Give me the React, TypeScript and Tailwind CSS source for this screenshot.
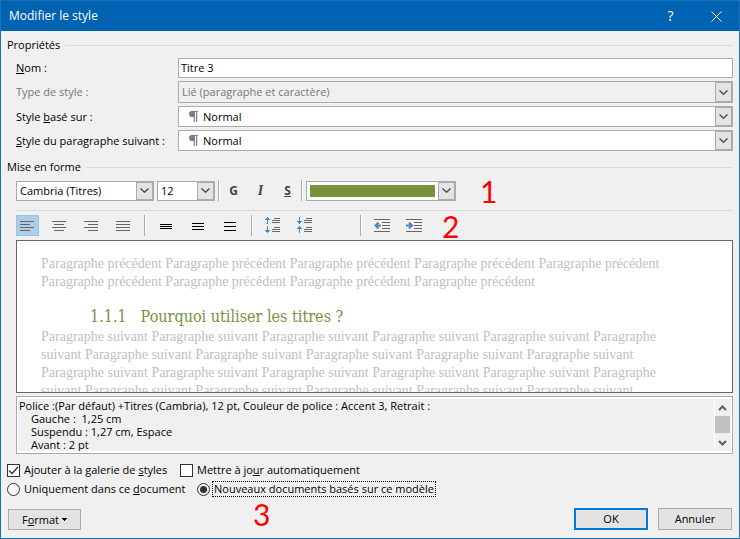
import React from 'react';

type IconProps = { children: React.ReactNode; color?: string };

const Icon: React.FC<IconProps> = ({ children, color = '#666666' }) => (
  <svg width="17" height="17" viewBox="0 0 17 17" stroke={color} fill="none" shapeRendering="crispEdges" aria-hidden="true">
    {children}
  </svg>
);

const Chevron = () => (
  <svg width="9" height="5" viewBox="0 0 9 5" fill="none" stroke="#444444" strokeWidth="1.3" aria-hidden="true">
    <path d="M0.5 0.5 4.5 4.2 8.5 0.5" />
  </svg>
);

const Pilcrow = () => (
  <svg className="ml-[10px] shrink-0" width="9" height="11" viewBox="0 0 9 11" fill="#7f7a94" aria-hidden="true">
    <path d="M3 0H9V1H8.2V11H7V1H6V11H4.8V6H3A3 3 0 0 1 3 0Z" />
  </svg>
);

interface ComboProps {
  id: string;
  label?: string;
  value: string;
  className: string;
  selectClass?: string;
  disabled?: boolean;
  icon?: React.ReactNode;
}

const Combo: React.FC<ComboProps> = ({ id, label, value, className, selectClass = 'pl-[3px]', disabled, icon }) => (
  <div className={`flex items-center border border-[#ababab] ${disabled ? 'bg-[#f0f0f0]' : 'bg-white'} ${className}`}>
    {icon}
    <select
      id={id}
      aria-label={label}
      disabled={disabled}
      className={`h-full min-w-0 flex-1 appearance-none bg-transparent outline-none disabled:text-[#777777] disabled:opacity-100 ${selectClass}`}
    >
      <option>{value}</option>
    </select>
    <ComboArrow />
  </div>
);

const ComboArrow = () => (
  <span className="pointer-events-none flex w-[17px] shrink-0 items-center justify-center self-stretch border border-[#ababab] bg-[#e3e3e3]">
    <Chevron />
  </span>
);

const GroupTitle: React.FC<{ children: React.ReactNode }> = ({ children }) => (
  <div className="flex h-4 items-center gap-[5px]">
    <h2>{children}</h2>
    <div className="h-px flex-1 bg-[#dadada]" />
  </div>
);

const Separator = () => <div className="w-[2px] self-stretch border-l border-[#ababab] bg-[#fafafa]" />;

const Mark: React.FC<{ children: React.ReactNode; className: string }> = ({ children, className }) => (
  <span className={`font-['Lato',sans-serif] text-[30px] leading-[20px] text-[#ff0000] ${className}`}>{children}</span>
);

const ToolButton: React.FC<{ label: string; active?: boolean; children: React.ReactNode }> = ({ label, active, children }) => (
  <button
    type="button"
    aria-label={label}
    className={`flex h-[21px] w-[23px] items-center justify-center border ${
      active ? 'border-[#88c9f0] bg-[#b1cde5]' : 'border-transparent'
    }`}
  >
    {children}
  </button>
);

const repeat = (text: string, count: number) => Array(count).fill(text).join(' ');

const App: React.FC = () => {
  return (
    <div className="border border-[#1a70b8] bg-[#f0f0f0] font-['Open_Sans','Noto_Sans',sans-serif] text-[11px] leading-4 text-black">
      <header className="flex h-[30px] items-center bg-[#0063b1] pl-2 text-white">
        <h1 className="flex-1 text-[12px]">Modifier le style</h1>
        <button type="button" aria-label="Aide" className="w-[45px] text-[14px]">?</button>
        <button type="button" aria-label="Fermer" className="flex w-[46px] justify-center">
          <svg width="11" height="11" viewBox="0 0 11 11" stroke="white" aria-hidden="true">
            <path d="M0.5 0.5 10.5 10.5M10.5 0.5 0.5 10.5" />
          </svg>
        </button>
      </header>

      <form className="px-[6px] pt-[6px] pb-[8px]" onSubmit={(e) => e.preventDefault()}>
        <GroupTitle>Propriétés</GroupTitle>

        <div className="mt-[5px] grid grid-cols-[162px_1fr] items-center gap-y-[3px] pl-[9px]">
          <label htmlFor="name"><u>N</u>om :</label>
          <input id="name" type="text" defaultValue="Titre 3" className="h-5 border border-[#ababab] bg-white pb-px pl-[2px] outline-none" />
          <label htmlFor="type" className="text-[#777777]">Type de style :</label>
          <Combo id="type" value="Lié (paragraphe et caractère)" className="h-[22px]" disabled />
          <label htmlFor="based">Style <u>b</u>asé sur :</label>
          <Combo id="based" value="Normal" className="h-[21px]" selectClass="pl-[5px]" icon={<Pilcrow />} />
          <label htmlFor="next"><u>S</u>tyle du paragraphe suivant :</label>
          <Combo id="next" value="Normal" className="h-[21px]" selectClass="pl-[5px]" icon={<Pilcrow />} />
        </div>

        <div className="mt-2">
          <GroupTitle>Mise en forme</GroupTitle>
        </div>

        <div className="pl-[9px]">
          <div className="mt-[5px] flex h-[21px] items-center">
            <Combo id="font" label="Police" value="Cambria (Titres)" className="h-5 w-[138px]" />
            <Combo id="size" label="Taille" value="12" className="mx-[3px] h-5 w-[58px]" />
            <Separator />
            <div className="flex w-[81px] justify-around text-[12px] text-[#444444]">
              <button type="button" aria-label="Gras" className="w-6 font-bold">G</button>
              <button type="button" aria-label="Italique" className="w-6 font-['Liberation_Serif',serif] text-[14px] font-bold italic">I</button>
              <button type="button" aria-label="Souligné" className="w-6 font-bold underline">S</button>
            </div>
            <Separator />
            <button type="button" aria-label="Couleur de police" className="ml-[3px] flex h-5 w-[150px] items-center border border-[#ababab] bg-white pl-[3px]">
              <span className="mr-[3px] h-3 flex-1 bg-[#76923c]" />
              <ComboArrow />
            </button>
            <Mark className="ml-6">1</Mark>
          </div>

          <div className="mt-[9px] h-px bg-[#dadada]" />

          <div className="mt-1 flex h-[21px] items-center gap-[9px]">
            <ToolButton label="Aligner à gauche" active>
              <Icon><path d="M1 4.5H15M1 7.5H11M1 10.5H15M1 13.5H11" /></Icon>
            </ToolButton>
            <ToolButton label="Centrer">
              <Icon><path d="M1 4.5H15M3 7.5H13M1 10.5H15M3 13.5H13" /></Icon>
            </ToolButton>
            <ToolButton label="Aligner à droite">
              <Icon><path d="M1 4.5H15M5 7.5H15M1 10.5H15M5 13.5H15" /></Icon>
            </ToolButton>
            <ToolButton label="Justifier">
              <Icon><path d="M1 4.5H15M1 7.5H15M1 10.5H15M1 13.5H15" /></Icon>
            </ToolButton>
            <Separator />
            <ToolButton label="Interligne simple">
              <Icon color="#000000"><path d="M2 7.5H14M2 9.5H14M2 11.5H14" /></Icon>
            </ToolButton>
            <ToolButton label="Interligne 1,5">
              <Icon color="#000000"><path d="M2 6.5H14M2 9.5H14M2 12.5H14" /></Icon>
            </ToolButton>
            <ToolButton label="Interligne double">
              <Icon color="#000000"><path d="M2 5.5H14M2 9.5H14M2 13.5H14" /></Icon>
            </ToolButton>
            <Separator />
            <ToolButton label="Augmenter l'espacement">
              <Icon>
                <path d="M9 1.5H15M7 3.5H15M7 5.5H15M9 10.5H15M7 12.5H15M7 14.5H15" />
                <path stroke="#4a86c0" d="M2.5 0V7M1 1.5H4M0 2.5H5M2.5 9V16M1 14.5H4M0 13.5H5" />
              </Icon>
            </ToolButton>
            <ToolButton label="Réduire l'espacement">
              <Icon>
                <path d="M9 1.5H15M7 3.5H15M7 5.5H15M9 10.5H15M7 12.5H15M7 14.5H15" />
                <path stroke="#4a86c0" d="M2.5 0V7M1 5.5H4M0 4.5H5M2.5 9V16M1 10.5H4M0 11.5H5" />
              </Icon>
            </ToolButton>
            <div className="w-[25px]" />
            <Separator />
            <ToolButton label="Diminuer le retrait">
              <Icon>
                <path d="M0 2.5H16M8 5.5H16M8 8.5H16M8 11.5H16M0 14.5H16" />
                <path stroke="#4a86c0" strokeWidth="2" shapeRendering="auto" d="M1 8.5H7M4.5 5.5 1.5 8.5 4.5 11.5" />
              </Icon>
            </ToolButton>
            <ToolButton label="Augmenter le retrait">
              <Icon>
                <path d="M0 2.5H16M8 5.5H16M8 8.5H16M8 11.5H16M0 14.5H16" />
                <path stroke="#4a86c0" strokeWidth="2" shapeRendering="auto" d="M0 8.5H6M3 5.5 6 8.5 3 11.5" />
              </Icon>
            </ToolButton>
            <Mark className="ml-[7px]">2</Mark>
          </div>

          <div className="mt-1 h-[153px] overflow-hidden border border-[#666666] bg-white pt-[14px] pr-[42px] pl-6 font-['Liberation_Serif',serif] text-[14px] leading-[18px] text-[#c0c0c0]">
            <p>{repeat('Paragraphe précédent', 9)}</p>
            <h3 className="mt-[15px] flex gap-[14px] pl-[49px] font-['DejaVu_Serif_Condensed','DejaVu_Serif',serif] text-[16px] leading-[22px] text-[#76923c]">
              <span>1.1.1</span>
              <span>Pourquoi utiliser les titres ?</span>
            </h3>
            <p>{repeat('Paragraphe suivant', 22)}</p>
          </div>

          <div className="mt-[3px] flex h-[58px] border border-[#ababab] bg-white px-px py-[2px]">
            <div className="flex-1 overflow-hidden bg-[#f0f0f0] pl-px text-[11px] leading-[13px]">
              <p>Police :(Par défaut) +Titres (Cambria), 12 pt, Couleur de police : Accent 3, Retrait :</p>
              <div className="pl-3">
                <p className="whitespace-pre">Gauche :  1,25 cm</p>
                <p>Suspendu : 1,27 cm, Espace</p>
                <p>Avant : 2 pt</p>
              </div>
            </div>
            <div className="ml-px flex w-4 flex-col items-center bg-[#f0f0f0] pr-px" aria-hidden="true">
              <svg width="15" height="17" viewBox="0 0 15 17" fill="none" stroke="#606060" strokeWidth="2">
                <path d="M4 11 7.5 7.5 11 11" />
              </svg>
              <div className="h-[17px] w-full bg-[#c2c2c2]" />
              <svg width="15" height="17" viewBox="0 0 15 17" fill="none" stroke="#606060" strokeWidth="2">
                <path d="M4 8 7.5 11.5 11 8" />
              </svg>
            </div>
          </div>
        </div>

        <div className="mt-2 flex h-4 items-center">
          <label className="flex w-[173px] items-center gap-1 whitespace-nowrap">
            <input type="checkbox" defaultChecked className="peer sr-only" />
            <span className="flex size-[13px] items-center justify-center border border-[#333333] bg-white">
              <svg width="11" height="11" viewBox="0 0 11 11" fill="none" stroke="#333333" strokeWidth="1.3" aria-hidden="true">
                <path d="M1 5.5 4 8.5 10 2" />
              </svg>
            </span>
            <span>Ajouter à la galerie de <u>s</u>tyles</span>
          </label>
          <label className="flex items-center gap-1 whitespace-nowrap">
            <input type="checkbox" className="size-[13px] appearance-none border border-[#333333] bg-white" />
            <span>Mettre à jo<u>u</u>r automatiquement</span>
          </label>
        </div>

        <div className="mt-[3px] flex h-4 items-center">
          <label className="flex w-[190px] items-center gap-1 whitespace-nowrap">
            <input type="radio" name="scope" className="size-[13px] appearance-none rounded-full border border-[#333333] bg-white" />
            <span>Uniquement dans ce <u>d</u>ocument</span>
          </label>
          <label className="flex items-center gap-[2px] whitespace-nowrap">
            <input
              type="radio"
              name="scope"
              defaultChecked
              className="size-[13px] appearance-none rounded-full border border-[#333333] bg-white checked:bg-[#333333] checked:bg-clip-content checked:p-[2px]"
            />
            <span className="border border-dotted border-black px-px leading-[14px]">Nouveaux documents basés sur ce modèle</span>
          </label>
        </div>

        <div className="flex h-[33px] items-end">
          <button type="button" className="ml-px flex h-[21px] w-[73px] items-center justify-center gap-[3px] border border-[#ababab] bg-[#e3e3e3]">
            <span>F<u>o</u>rmat</span>
            <svg width="5" height="3" viewBox="0 0 5 3" fill="#000000" shapeRendering="crispEdges" aria-hidden="true"><path d="M0 0H5V1H4V2H3V3H2V2H1V1H0Z" /></svg>
          </button>
          <Mark className="ml-[172px] self-center">3</Mark>
          <button type="submit" className="ml-auto h-[22px] w-[74px] border-2 border-[#0078d7] bg-[#e3e3e3]">OK</button>
          <button type="button" className="mr-px ml-[10px] h-[22px] w-[74px] border border-[#ababab] bg-[#e3e3e3]">Annuler</button>
        </div>
      </form>
    </div>
  );
};

export default App;
